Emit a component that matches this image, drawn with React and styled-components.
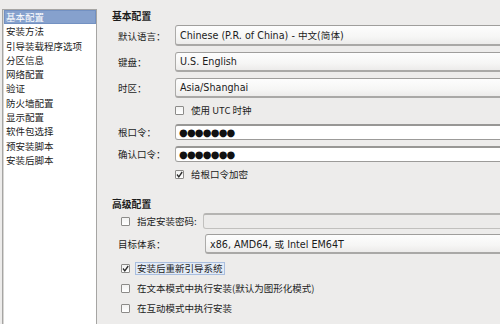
import styled, { createGlobalStyle } from "styled-components";

const Global = createGlobalStyle`
  html, body {
    margin: 0;
    padding: 0;
    background: #edeceb;
    overflow: hidden;
  }
  body {
    font-family: "DejaVu Sans", "Noto Sans CJK SC", sans-serif;
    font-size: 10px;
    color: #1c1c1c;
  }
`;

const Page = styled.div`
  display: flex;
  height: 324px;
  width: 500px;
  overflow: hidden;
`;

const Sidebar = styled.ul`
  list-style: none;
  margin: 9px 0 0 2px;
  padding: 0 0 0 1px;
  width: 92px;
  flex: none;
  height: 330px;
  background: #fff;
  border: 1px solid #a6a5a3;
  border-bottom: none;
  box-shadow: inset 1px 1px 0 #d8d7d5;
`;

const NavItem = styled.li`
  height: 14.3px;
  line-height: 14px;
  padding-left: 2px;
  font-family: "Noto Sans CJK SC", sans-serif;
  font-size: 9.5px;
  white-space: nowrap;
  color: ${(p) => (p.$active ? "#fff" : "#1c1c1c")};
  background: ${(p) => (p.$active ? "#86a1cd" : "transparent")};
  box-shadow: ${(p) => (p.$active ? "inset 0 0 0 1px #7391c2" : "none")};
`;

const Main = styled.div`
  flex: 1;
  min-width: 0;
  padding: 8px 0 0 15px;
  display: flex;
  flex-direction: column;
`;

const SectionTitle = styled.div`
  font-family: "Noto Sans CJK SC", sans-serif;
  font-weight: bold;
  font-size: 9.8px;
  line-height: 16px;
  margin-top: ${(p) => p.$top || 0}px;
`;

const FormGrid = styled.div`
  display: grid;
  grid-template-columns: ${(p) => p.$label}px 1fr;
  align-items: center;
  margin-left: ${(p) => p.$indent || 6}px;
`;

const Label = styled.div`
  font-family: "Noto Sans CJK SC", sans-serif;
  font-size: 9.5px;
  white-space: nowrap;
  height: ${(p) => p.$h}px;
  margin-top: ${(p) => p.$mt || 0}px;
  display: flex;
  align-items: center;
`;

const Combo = styled.div`
  height: ${(p) => p.$h}px;
  margin-top: ${(p) => p.$mt || 0}px;
  margin-right: -6px;
  box-sizing: border-box;
  border: 1px solid #acaba9;
  border-top-color: #9f9e9c;
  border-bottom: 2px solid #a9a8a6;
  border-radius: 3px;
  background: linear-gradient(#fdfdfd, #f6f6f5 60%, #ecebea);
  display: flex;
  align-items: center;
  padding-left: 4px;
  font-size: 9.6px;
  white-space: nowrap;
  overflow: hidden;
`;

const Entry = styled.div`
  height: 16px;
  margin-top: ${(p) => p.$mt || 0}px;
  margin-right: -6px;
  box-sizing: border-box;
  border: 1px solid #a9a8a6;
  border-top: 2px solid #989795;
  border-bottom-color: #9c9b99;
  border-radius: 3px;
  background: ${(p) => (p.$disabled ? "#ecebea" : "#fff")};
  ${(p) => p.$disabled && "border-color: #c1c0be; border-top-color: #b5b4b2;"}
  display: flex;
  align-items: center;
  padding-left: 3px;
  font-family: "DejaVu Sans", sans-serif;
  font-size: 10px;
  letter-spacing: -0.8px;
  line-height: 1;
  color: #111;
`;

const CheckRow = styled.label`
  display: flex;
  align-items: center;
  gap: 5px;
  height: ${(p) => p.$h || 20}px;
  margin-left: ${(p) => p.$indent}px;
  margin-top: ${(p) => p.$mt || 0}px;
  font-family: "Noto Sans CJK SC", sans-serif;
  font-size: 9.5px;
  white-space: nowrap;
`;

const Box = styled.span`
  width: 7px;
  height: 7px;
  flex: none;
  border: 1px solid #8c8b89;
  border-radius: 1px;
  background: linear-gradient(#f2f2f1, #fff);
  position: relative;
`;

const Caption = styled.span`
  padding: 0 1px;
  border: 1px ${(p) => (p.$focus ? "solid #a9bedf" : "solid transparent")};
  background: ${(p) => (p.$focus ? "#e3ebf6" : "transparent")};
  line-height: 11px;
`;

const Check = ({ checked }) => (
  <Box>
    {checked && (
      <svg width="9" height="9" viewBox="0 0 9 9" style={{ position: "absolute", left: -1, top: -1 }}>
        <path d="M2 4.5 L3.8 6.8 L7.2 2" fill="none" stroke="#2b2b2b" strokeWidth="1.3" />
      </svg>
    )}
  </Box>
);

const navItems = [
  "基本配置",
  "安装方法",
  "引导装载程序选项",
  "分区信息",
  "网络配置",
  "验证",
  "防火墙配置",
  "显示配置",
  "软件包选择",
  "预安装脚本",
  "安装后脚本",
];

export default function App() {
  return (
    <>
      <Global />
      <Page>
        <Sidebar>
          {navItems.map((item, i) => (
            <NavItem key={item} $active={i === 0}>
              {item}
            </NavItem>
          ))}
        </Sidebar>
        <Main>
          <SectionTitle>基本配置</SectionTitle>
          <FormGrid $label={57}>
            <Label $h={21} $mt={1}>默认语言：</Label>
            <Combo $h={21} $mt={1}>Chinese (P.R. of China) - 中文(简体)</Combo>
            <Label $h={20} $mt={6}>键盘：</Label>
            <Combo $h={20} $mt={6}>U.S. English</Combo>
            <Label $h={20} $mt={6}>时区：</Label>
            <Combo $h={20} $mt={6}>Asia/Shanghai</Combo>
          </FormGrid>
          <CheckRow $indent={63} $h={20} $mt={2}>
            <Check />
            <Caption>使用 UTC 时钟</Caption>
          </CheckRow>
          <FormGrid $label={57}>
            <Label $h={16} $mt={4}>根口令：</Label>
            <Entry $mt={4}>●●●●●●●</Entry>
            <Label $h={16} $mt={6}>确认口令：</Label>
            <Entry $mt={6}>●●●●●●●</Entry>
          </FormGrid>
          <CheckRow $indent={63} $h={20} $mt={2}>
            <Check checked />
            <Caption>给根口令加密</Caption>
          </CheckRow>
          <SectionTitle $top={12}>高级配置</SectionTitle>
          <FormGrid $label={82} $indent={9}>
            <Label $h={16} $mt={1}>
              <CheckRow $indent={0} $h={16}>
                <Check />
                <Caption>指定安装密码:</Caption>
              </CheckRow>
            </Label>
            <Entry $mt={1} $disabled />
          </FormGrid>
          <FormGrid $label={87} $indent={6}>
            <Label $h={20} $mt={5}>目标体系：</Label>
            <Combo $h={20} $mt={5}>x86, AMD64, 或 Intel EM64T</Combo>
          </FormGrid>
          <CheckRow $indent={9} $h={20} $mt={4}>
            <Check checked />
            <Caption $focus>安装后重新引导系统</Caption>
          </CheckRow>
          <CheckRow $indent={9} $h={20}>
            <Check />
            <Caption>在文本模式中执行安装(默认为图形化模式)</Caption>
          </CheckRow>
          <CheckRow $indent={9} $h={20}>
            <Check />
            <Caption>在互动模式中执行安装</Caption>
          </CheckRow>
        </Main>
      </Page>
    </>
  );
}
